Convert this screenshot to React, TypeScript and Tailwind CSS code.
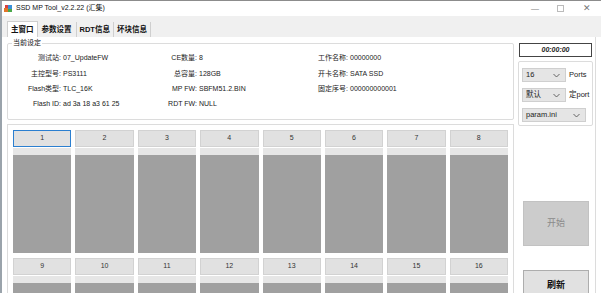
import React from "react";

const F = { fontFamily: '"Liberation Sans", "Noto Sans CJK SC", sans-serif' };

function Chevron() {
  return (
    <svg width="7" height="5" viewBox="0 0 7 5" className="shrink-0">
      <path d="M0.5 1 L3.5 4 L6.5 1" fill="none" stroke="#555" strokeWidth="0.9" />
    </svg>
  );
}

function Select({ text, w }: { text: string; w: string }) {
  return (
    <div className={`${w} h-[14px] bg-[#e5e5e5] border border-[#cfcfcf] flex items-center justify-between pl-[3px] pr-[5px] text-[7.5px] text-[#222]`}>
      <span>{text}</span>
      <Chevron />
    </div>
  );
}

function Cell({ n, active }: { n: number; active?: boolean }) {
  return (
    <div className="flex flex-col">
      <div
        className={`h-[17px] flex items-center justify-center text-[7px] text-[#333] bg-[#e1e1e1] border ${
          active ? "border-[#2b7fd0]" : "border-[#d2d2d2]"
        }`}
      >
        {n}
      </div>
      <div className="mt-[1px] h-[7px] bg-[#e6e6e6]" />
      <div className="h-[98px] bg-[#a0a0a0]" />
    </div>
  );
}

const rows: [string, string, string, string, string, string][] = [
  ["测试站:", "07_UpdateFW", "CE数量:", "8", "工作名称:", "00000000"],
  ["主控型号:", "PS3111", "总容量:", "128GB", "开卡名称:", "SATA SSD"],
  ["Flash类型:", "TLC_16K", "MP FW:", "SBFM51.2.BIN", "固定序号:", "000000000001"],
  ["Flash ID:", "ad 3a 18 a3 61 25", "RDT FW:", "NULL", "", ""],
];

export default function App() {
  return (
    <div style={F} className="w-[601px] h-[293px] overflow-hidden bg-white relative flex flex-col border-t border-[#8c8c8c]">
      <div className="absolute left-0 top-0 bottom-0 w-[2px] bg-[#9aa3ab]" />
      {/* title bar */}
      <div className="h-[15px] flex items-center pl-[4px] pr-[10px] shrink-0">
        <svg width="9" height="9" viewBox="0 0 9 9" className="shrink-0">
          <rect x="0" y="4" width="4" height="4" fill="#e2762a" />
          <rect x="4" y="1" width="4" height="4" fill="#3a8fd8" />
          <rect x="4" y="5" width="4" height="3" fill="#4aa84a" />
          <rect x="1" y="1" width="3" height="3" fill="#d94040" />
        </svg>
        <span className="ml-[3px] text-[7px] text-[#111]">SSD MP Tool_v2.2.22 (汇集)</span>
        <div className="ml-auto flex items-center text-[#777]">
          <span className="text-[8px] w-[10px] text-center">—</span>
          <span className="ml-[17px] w-[7px] h-[7px] border border-[#bbb]" />
          <span className="ml-[19px] text-[9px] leading-none">✕</span>
        </div>
      </div>
      {/* tab bar */}
      <div className="h-[21px] bg-[#f0f0f0] flex items-end pl-[7px] shrink-0">
        <div className="h-[16px] px-[3px] flex items-center bg-white border-l border-r border-t border-[#cfcfcf] text-[7.5px] font-bold text-[#111]">主窗口</div>
        <div className="h-[15px] px-[4px] flex items-center border-r border-[#cfcfcf] text-[7.5px] font-bold text-[#111]">参数设置</div>
        <div className="h-[15px] px-[3px] flex items-center border-r border-[#cfcfcf] text-[7.5px] font-bold text-[#111]">RDT信息</div>
        <div className="h-[15px] px-[3px] flex items-center border-r border-[#cfcfcf] text-[7.5px] font-bold text-[#111]">坏块信息</div>
      </div>
      {/* body */}
      <div className="flex-1 flex ml-[3px] mr-[5px] border-r border-[#dcdcdc] pl-[4px]">
        {/* left column */}
        <div className="w-[507px] flex flex-col">
          <div className="mt-[6px] h-[77px] border border-[#dcdcdc] rounded-[2px] relative pt-[7px]">
            <span className="absolute -top-[6px] left-[4px] bg-white px-[1px] text-[7px] text-[#111]">当前设定</span>
            {rows.map((r, i) => (
              <div key={i} className="flex h-[15.3px] items-center text-[7px] text-[#222]">
                <span className="w-[53px] text-right">{r[0]}</span>
                <span className="w-[104px] pl-[2px]">{r[1]}</span>
                <span className="w-[32px] text-right">{r[2]}</span>
                <span className="w-[113px] pl-[2px]">{r[3]}</span>
                <span className="w-[38px] text-right">{r[4]}</span>
                <span className="pl-[2px]">{r[5]}</span>
              </div>
            ))}
          </div>
          <div className="mt-[4px] flex-1 border-t border-l border-r border-[#dcdcdc] px-[5px] pt-[5px]">
            <div className="grid grid-cols-8 gap-x-[4px] gap-y-[5px]">
              {Array.from({ length: 16 }, (_, i) => (
                <Cell key={i} n={i + 1} active={i === 0} />
              ))}
            </div>
          </div>
        </div>
        {/* right column */}
        <div className="ml-[4px] w-[75px] flex flex-col">
          <div className="mt-[6px] ml-[1px] w-[73px] h-[14px] border border-[#444] flex items-center justify-center text-[7px] italic font-bold text-[#222]">
            00:00:00
          </div>
          <div className="mt-[4px] h-[65px] border border-[#dcdcdc] rounded-[2px] flex flex-col pl-[3px] pt-[6px] gap-[6px]">
            <div className="flex items-center">
              <Select text="16" w="w-[44px]" />
              <span className="ml-[3px] text-[7.5px] text-[#222]">Ports</span>
            </div>
            <div className="flex items-center">
              <Select text="默认" w="w-[44px]" />
              <span className="ml-[3px] text-[7.5px] text-[#222]">定port</span>
            </div>
            <Select text="param.ini" w="w-[64px]" />
          </div>
          <div className="mt-[75px] ml-[5px] w-[66px] h-[45px] bg-[#cccccc] border border-[#c2c2c2] flex items-center justify-center text-[9px] text-[#8a8a8a]">
            开始
          </div>
          <div className="mt-[24px] ml-[5px] w-[66px] h-[32px] bg-[#e1e1e1] border border-[#adadad] flex items-center justify-center text-[9px] font-bold text-[#111]">
            刷新
          </div>
        </div>
      </div>
    </div>
  );
}
